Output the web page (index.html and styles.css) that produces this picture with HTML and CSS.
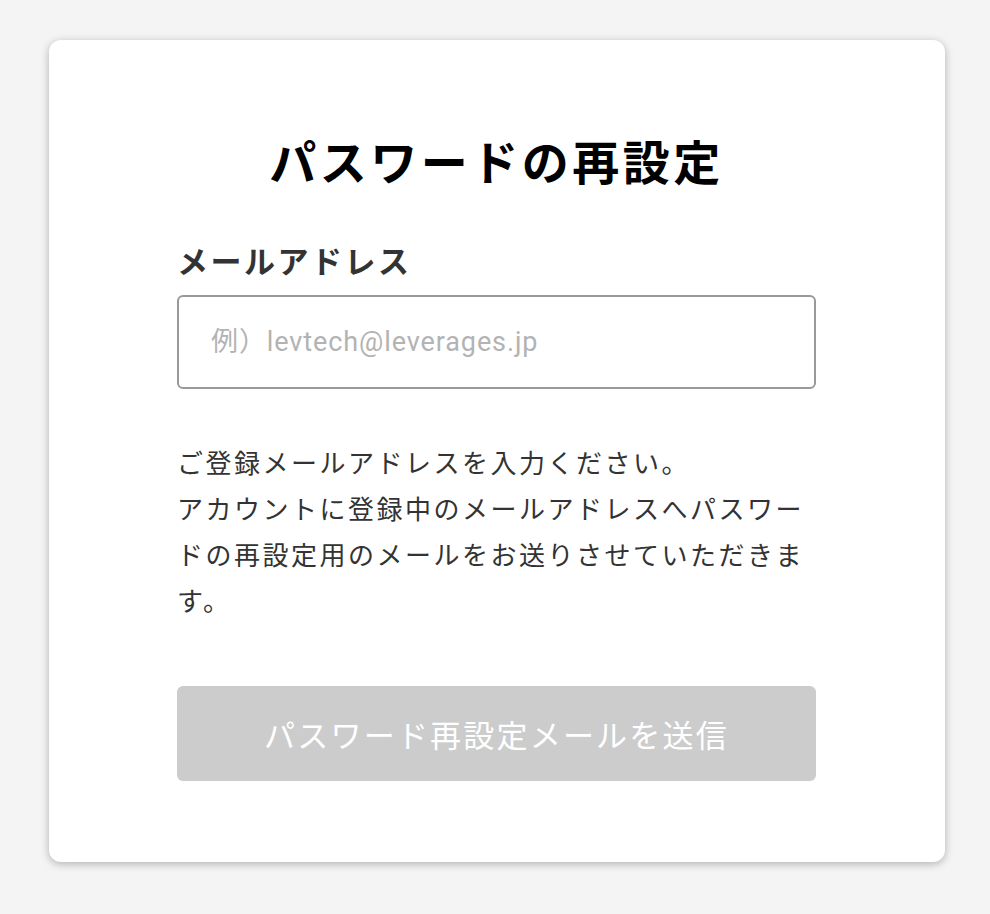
FILE: index.html
```html
<!DOCTYPE html>
<html lang="ja">
<head>
<meta charset="utf-8">
<title>パスワードの再設定</title>
<link rel="stylesheet" href="styles.css">
</head>
<body>
<main class="page">
  <section class="card">
    <h1 class="title">パスワードの再設定</h1>
    <form class="form">
      <label class="label" for="email">メールアドレス</label>
      <input class="input" id="email" type="email" placeholder="例）levtech@leverages.jp">
      <p class="desc">ご登録メールアドレスを入力ください。<br>アカウントに登録中のメールアドレスへパスワードの再設定用のメールをお送りさせていただきます。</p>
      <button class="btn" type="button" disabled>パスワード再設定メールを送信</button>
    </form>
  </section>
</main>
</body>
</html>
```

FILE: styles.css
```css
* { box-sizing: border-box; }
html, body { margin: 0; padding: 0; }
body {
  background: #f4f4f4;
  font-family: "Noto Sans CJK JP", "Noto Sans", sans-serif;
  color: #333;
}
.page {
  padding: 40px 45px 40px 49px;
}
.card {
  width: 896px;
  height: 822px;
  background: #fff;
  border-radius: 12px;
  box-shadow: 0 2px 8px rgba(0, 0, 0, 0.28);
  padding: 87px 129px 0 128px;
}
.title {
  margin: 0;
  font-size: 47px;
  line-height: 66px;
  font-weight: 700;
  letter-spacing: 3.5px;
  text-align: center;
  color: #000;
}
.form {
  display: flex;
  flex-direction: column;
  margin-top: 45px;
}
.label {
  font-size: 31px;
  line-height: 44px;
  font-weight: 700;
  letter-spacing: 2.5px;
  color: #333;
}
.input {
  margin-top: 13px;
  height: 94px;
  width: 100%;
  border: 2px solid #999;
  border-radius: 6px;
  padding: 0 32px;
  font-family: Roboto, "Noto Sans CJK JP", sans-serif;
  font-size: 27px;
  letter-spacing: 0.9px;
  color: #333;
  outline: none;
}
.input::placeholder { color: #b3b3b3; }
.desc {
  margin: 50px 0 0;
  font-size: 26px;
  line-height: 46px;
  letter-spacing: 2.5px;
  color: #333;
}
.btn {
  margin-top: 63px;
  height: 95px;
  width: 100%;
  border: none;
  border-radius: 6px;
  background: #ccc;
  color: #fff;
  font-family: "Noto Sans CJK JP", sans-serif;
  font-size: 31px;
  letter-spacing: 2.2px;
}
```
